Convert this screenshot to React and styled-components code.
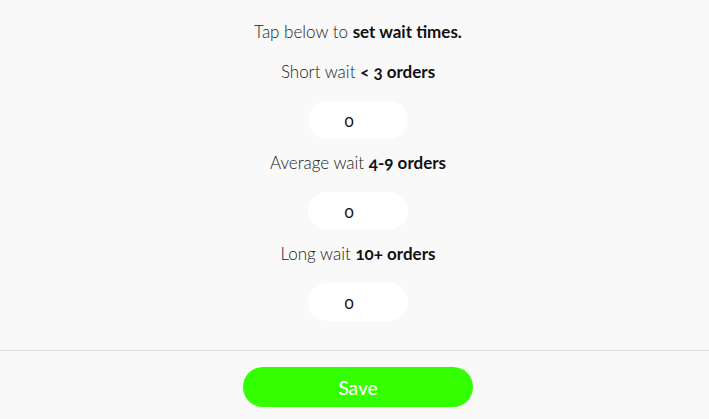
import React from "react";
import styled, { createGlobalStyle } from "styled-components";

const Global = createGlobalStyle`
  html, body { margin: 0; padding: 0; background: #f9f9f9; overflow: hidden; }
  body { font-family: Lato, "Open Sans", sans-serif; font-variant-numeric: oldstyle-nums; }
`;

const Page = styled.div`
  width: 716px;
  height: 419px;
  display: flex;
  flex-direction: column;
  background: #f9f9f9;
`;

const Content = styled.div`
  flex: 1;
  display: flex;
  flex-direction: column;
  align-items: center;
  padding-top: 22px;
`;

const Title = styled.div`
  font-size: 17px;
  line-height: 20px;
  color: #222;
  font-weight: 300;
  margin-bottom: 20px;
  b { font-weight: 700; color: #111; }
`;

const Group = styled.div`
  display: flex;
  flex-direction: column;
  align-items: center;
  margin-bottom: 14px;
`;

const Label = styled.div`
  font-size: 17px;
  line-height: 20px;
  color: #222;
  font-weight: 300;
  margin-bottom: 19px;
  b { font-weight: 700; color: #111; }
`;

const Input = styled.input`
  width: 100px;
  height: 38px;
  box-sizing: border-box;
  border: none;
  border-radius: 19px;
  background: #fff;
  text-align: center;
  font-family: Lato, sans-serif;
  font-variant-numeric: oldstyle-nums;
  font-size: 17px;
  color: #111;
  outline: none;
  padding: 0 18px 0 0;
`;

const Footer = styled.div`
  border-top: 1px solid #dcdcdc;
  height: 69px;
  box-sizing: border-box;
  display: flex;
  justify-content: center;
  padding-top: 16px;
`;

const SaveButton = styled.button`
  width: 230px;
  height: 40px;
  border: none;
  border-radius: 20px;
  background: #33ff00;
  color: #fff;
  font-family: Lato, sans-serif;
  font-size: 19px;
  font-weight: 500;
  cursor: pointer;
`;

const rows = [
  { label: "Short wait", bold: "< 3 orders" },
  { label: "Average wait", bold: "4-9 orders" },
  { label: "Long wait", bold: "10+ orders" },
];

export default function App() {
  return (
    <Page>
      <Global />
      <Content>
        <Title>
          Tap below to <b>set wait times.</b>
        </Title>
        {rows.map((r) => (
          <Group key={r.label}>
            <Label>
              {r.label} <b>{r.bold}</b>
            </Label>
            <Input defaultValue="0" />
          </Group>
        ))}
      </Content>
      <Footer>
        <SaveButton>Save</SaveButton>
      </Footer>
    </Page>
  );
}
